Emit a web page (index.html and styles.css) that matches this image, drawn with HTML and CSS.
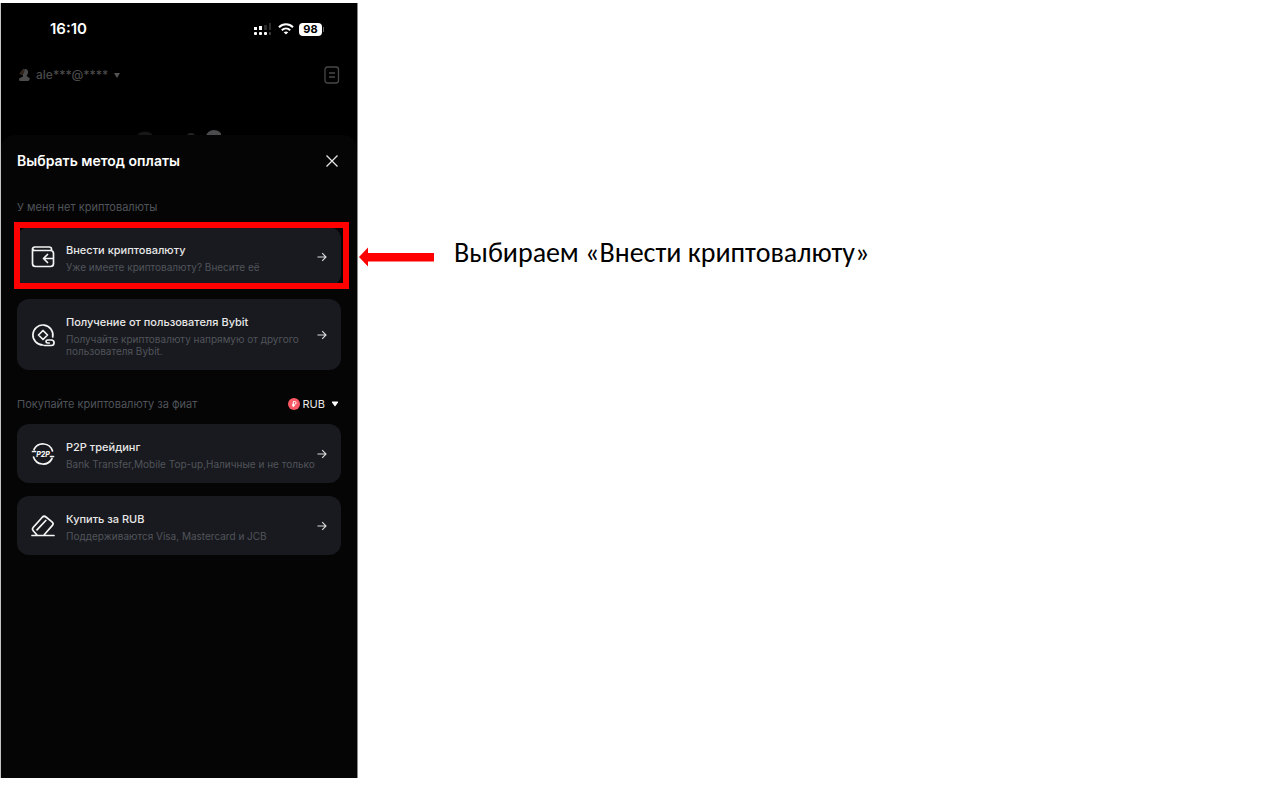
FILE: index.html
```html
<!DOCTYPE html>
<html lang="ru">
<head>
<meta charset="utf-8">
<meta name="viewport" content="width=device-width, initial-scale=1">
<title>Выбрать метод оплаты</title>
<link rel="stylesheet" href="styles.css">
</head>
<body>
<main class="guide">
  <section class="phone">
    <div class="status">
      <span class="clock">16:10</span>
      <div class="signals">
        <svg width="20" height="14" viewBox="0 0 20 14" fill="#fff">
          <rect x="1" y="5" width="3" height="3"/><rect x="6" y="4" width="3" height="4"/>
          <rect x="11" y="3" width="3" height="5" fill="#2b2b2b"/><rect x="16" y="1" width="2" height="7" fill="#2b2b2b"/>
          <rect x="1" y="10" width="3" height="3" rx="1"/><rect x="6" y="10" width="3" height="3" rx="1"/><rect x="11" y="10" width="3" height="3" rx="1"/><rect x="16" y="10" width="2" height="3" rx="1" fill="#444"/>
        </svg>
        <svg width="16" height="12" viewBox="0 0 16 12" fill="none" stroke="#fff" stroke-width="2">
          <path d="M1 4.200C5 .2 11 .2 15 4.200M3.800 7.200c2.400-2.300 6-2.300 8.400 0"/><path d="M8 11.600 5.700 9.300c1.300-1.200 3.300-1.200 4.600 0z" fill="#fff" stroke="none"/>
        </svg>
        <span class="battery">98</span>
      </div>
    </div>
    <header class="account">
      <button class="user" type="button">
        <svg width="12" height="14" viewBox="0 0 12 14"><path d="M4 3.500C4 1.500 5 1 7 1s3 1.200 3 3.200S9 7 8.500 8L12 10.500 10.500 13h-9L1 10.500 5 8.500z" fill="#4b4b4b"/><path d="M4 2 7 1 6 5 4 7 1 6z" fill="#31241c"/></svg>
        <span>ale***@****</span>
        <svg width="6" height="5" viewBox="0 0 6 5"><path d="M0 0h6L3 5z" fill="#555"/></svg>
      </button>
      <button class="plain" type="button" aria-label="История">
        <svg width="16" height="18" viewBox="0 0 16 18" fill="none" stroke="#484848" stroke-width="1.300"><rect x="1" y="1" width="13.500" height="16" rx="2.500"/><path d="M5 7h6M5 11h6"/></svg>
      </button>
    </header>
    <div class="behind">
      <svg width="84" height="5" viewBox="0 0 84 5"><ellipse cx="8" cy="7" rx="8" ry="5.500" fill="#171717"/><ellipse cx="54" cy="6" rx="4" ry="3" fill="#242424"/><ellipse cx="77" cy="7" rx="8" ry="7" fill="#4c4c4f"/></svg>
    </div>
    <div class="sheet">
      <div class="sheet-head">
        <h1>Выбрать метод оплаты</h1>
        <button class="plain" type="button" aria-label="Закрыть">
          <svg width="12" height="12" viewBox="0 0 12 12" stroke="#e6e6e6" stroke-width="1.300"><path d="m.5.5 11 11m0-11-11 11"/></svg>
        </button>
      </div>

      <h2 class="group">У меня нет криптовалюты</h2>
      <div class="cards">
        <button class="card marked" type="button">
          <svg class="icon" viewBox="0 0 24 24"><path d="M20.500 5V4Q20.500 2 18 2H4Q1.500 2 1.500 4.500V18.500Q1.500 21.500 4.500 21.500H19.500Q22.500 21.500 22.500 18.500V8.500Q22.500 5.500 19.500 5.500H4Q1.500 5.500 1.500 3.500M22 13.500h-9M16.500 9.500l-4 4 4 4"/></svg>
          <span class="text"><span class="name">Внести криптовалюту</span><span class="note">Уже имеете криптовалюту? Внесите её</span></span>
          <svg class="go" viewBox="0 0 10 10"><path d="M.5 5h8.500M5.200 1.200 9 5 5.200 8.800"/></svg>
        </button>
        <button class="card" type="button">
          <svg class="icon" viewBox="0 0 24 24"><path d="M21.700 14A10 10 0 1 0 12 22M12 7.500l4.500 4.500-4.500 4.500-4.500-4.500zM13.500 22.500h6.800a2.700 2.700 0 0 0 0-5.500h-3.600q-1.700 0-1.700 1.500t1.700 1.500h1.500"/></svg>
          <span class="text"><span class="name">Получение от пользователя Bybit</span><span class="note">Получайте криптовалюту напрямую от другого пользователя Bybit.</span></span>
          <svg class="go" viewBox="0 0 10 10"><path d="M.5 5h8.500M5.200 1.200 9 5 5.200 8.800"/></svg>
        </button>
      </div>

      <div class="fiat">
        <h2 class="group">Покупайте криптовалюту за фиат</h2>
        <button class="currency" type="button">
          <svg width="12" height="12" viewBox="0 0 12 12"><circle cx="6" cy="6" r="6" fill="#fb5965"/><path d="M5.300 9V3.500h1.400a1.400 1.400 0 0 1 0 2.800H4M4 7.700h3" fill="none" stroke="#fff"/></svg>
          <span>RUB</span>
          <svg class="caret" width="8" height="6" viewBox="0 0 8 6"><path d="M1.500.5h5q1 0 .5 1L4.500 5q-.5.700-1 0L1 1.500q-.5-1 .5-1z" fill="#fff"/></svg>
        </button>
      </div>
      <div class="cards">
        <button class="card" type="button">
          <svg class="icon" viewBox="0 0 24 24"><path d="M3 7.500a10 10 0 0 1 18.500 1.500M1.500 9.500h3M21 16.500a10 10 0 0 1-18.500-1.500M19.500 14.500h3"/><text x="12" y="15" class="p2p">P2P</text></svg>
          <span class="text"><span class="name">P2P трейдинг</span><span class="note">Bank Transfer,Mobile Top-up,Наличные и не только</span></span>
          <svg class="go" viewBox="0 0 10 10"><path d="M.5 5h8.500M5.200 1.200 9 5 5.200 8.800"/></svg>
        </button>
        <button class="card" type="button">
          <svg class="icon" viewBox="0 0 24 24"><path d="M1 21.500h22M6 21 2.200 16.700Q.8 15 2.300 13.300L11.300 3.200Q13 1.400 15 3L21 7.800Q23 9.500 21.400 11.400L13 21M6 15.800 14.800 6.500"/></svg>
          <span class="text"><span class="name">Купить за RUB</span><span class="note">Поддерживаются Visa, Mastercard и JCB</span></span>
          <svg class="go" viewBox="0 0 10 10"><path d="M.5 5h8.500M5.200 1.200 9 5 5.200 8.800"/></svg>
        </button>
      </div>
    </div>
  </section>

  <aside class="hint">
    <svg width="75" height="20" viewBox="0 0 75 20"><path d="M0 10 9 .5v5.500h66v8.500H9V19.500z" fill="#f00"/></svg>
    <p>Выбираем «Внести криптовалюту»</p>
  </aside>
</main>
</body>
</html>
```
FILE: styles.css
```css
* { box-sizing: border-box; }
body { margin: 0; background: #fff; font-family: Inter, "Liberation Sans", sans-serif; }
h1, h2, p { margin: 0; }
button { margin: 0; padding: 0; border: 0; background: none; color: inherit; font: inherit; text-align: left; cursor: pointer; }
svg { display: block; flex: none; }

.guide { display: flex; align-items: flex-start; padding: 3px 0 7px 1px; min-height: 100vh; }
.phone { display: flex; flex-direction: column; flex: 0 1 356px; min-height: calc(100vh - 10px); background: #000; color: #fff; box-shadow: 1px 0 #888, -1px 0 #c4c4c4; }

.status { display: flex; justify-content: space-between; align-items: center; padding: 18px 35px 0 49px; height: 34px; }
.clock { font-size: 15px; line-height: 18px; font-weight: 600; }
.signals { display: flex; align-items: center; gap: 5px; }
.battery { position: relative; width: 23px; border-radius: 4px; background: #fff; color: #000; font-size: 11px; line-height: 13px; font-weight: 700; text-align: center; }
.battery::after { content: ""; position: absolute; left: 24px; top: 4px; width: 1px; height: 5px; background: #666; }

.account { display: flex; justify-content: space-between; align-items: center; margin-top: 28px; padding: 0 17px; height: 20px; }
.user { display: flex; align-items: center; gap: 6px; color: #4a4a4a; font-size: 12px; line-height: 18px; font-weight: 500; }
.behind { display: flex; flex: none; justify-content: center; align-items: flex-end; height: 50px; }

.sheet { flex: 1; padding: 16px 16px 24px; border-radius: 14px 14px 0 0; background: #050505; }
.sheet-head { display: flex; justify-content: space-between; align-items: center; padding-right: 3px; }
.sheet-head h1 { font-size: 14px; line-height: 20px; font-weight: 600; }
.group { color: #50545a; font-size: 11px; line-height: 16px; font-weight: 400; }
.sheet-head + .group { margin-top: 28px; }
.cards { display: flex; flex-direction: column; gap: 13px; margin-top: 12px; }
.card { position: relative; display: flex; align-items: center; width: 100%; min-height: 59px; padding: 13px 14px; border-radius: 12px; background: #191a1f; }
.marked::after { content: ""; position: absolute; inset: -5px -8px -3px -3px; border: 6px solid #f00; }
.icon { width: 24px; height: 24px; fill: none; stroke: #f4f4f4; stroke-width: 1.7; stroke-linecap: round; stroke-linejoin: round; }
.p2p { fill: #f4f4f4; stroke: none; font-size: 7px; font-weight: 800; font-style: italic; text-anchor: middle; }
.text { display: flex; flex: 1; flex-direction: column; gap: 3px; min-width: 0; margin-left: 11px; padding-top: 2px; }
.name { color: #e8e8e8; font-size: 11px; line-height: 16px; font-weight: 500; }
.note { color: #50545a; font-size: 10px; line-height: 12px; }
.go { width: 10px; height: 10px; fill: none; stroke: #ddd; stroke-width: 1.1; }

.fiat { display: flex; justify-content: space-between; align-items: center; margin-top: 26px; padding-right: 2px; }
.currency { display: flex; align-items: center; gap: 3px; font-size: 11px; line-height: 16px; color: #e8e8e8; }
.caret { margin-left: 3px; }

.hint { display: flex; align-items: flex-end; gap: 20px; margin: 230px 24px 0 2px; color: #000; }
.hint svg { margin-bottom: 6px; }
.hint p { font-family: Carlito, Calibri, "Noto Sans", sans-serif; font-size: 28px; line-height: 40px; }
```
